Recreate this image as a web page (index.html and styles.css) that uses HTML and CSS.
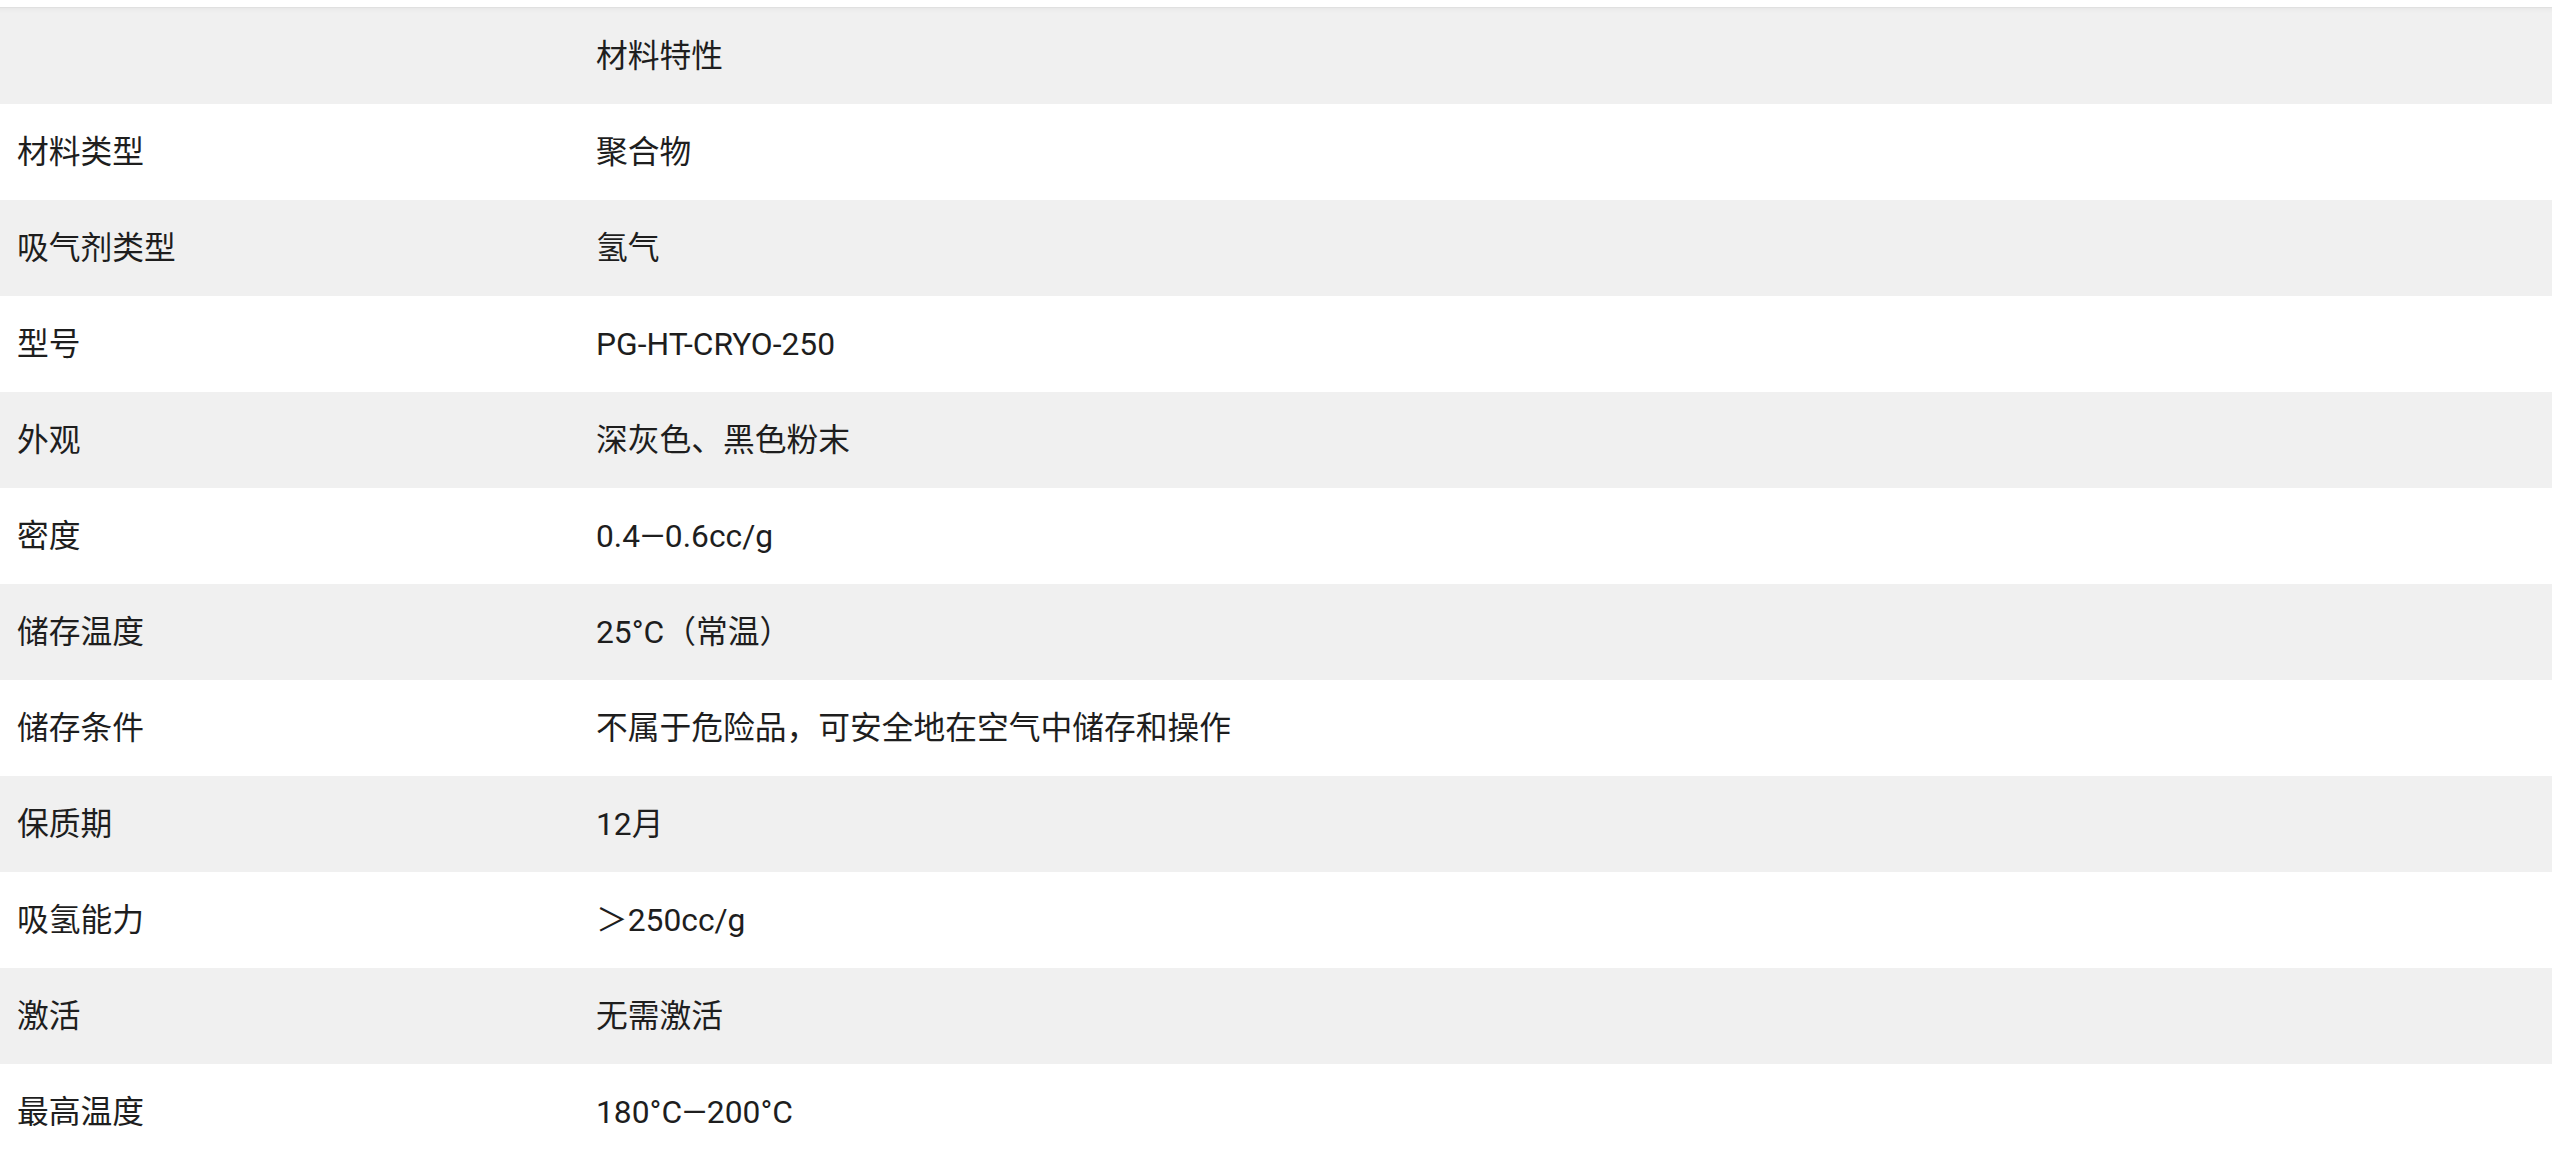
FILE: index.html
```html
<!DOCTYPE html>
<html lang="zh-CN">
<head>
<meta charset="utf-8">
<title>材料特性</title>
<link rel="stylesheet" href="styles.css">
</head>
<body>
<table class="spec">
  <tbody>
    <tr class="head"><td class="key"></td><td class="val">材料特性</td></tr>
    <tr><td class="key">材料类型</td><td class="val">聚合物</td></tr>
    <tr><td class="key">吸气剂类型</td><td class="val">氢气</td></tr>
    <tr><td class="key">型号</td><td class="val">PG-HT-CRYO-250</td></tr>
    <tr><td class="key">外观</td><td class="val">深灰色、黑色粉末</td></tr>
    <tr><td class="key">密度</td><td class="val">0.4—0.6cc/g</td></tr>
    <tr><td class="key">储存温度</td><td class="val">25°C（常温）</td></tr>
    <tr><td class="key">储存条件</td><td class="val">不属于危险品，可安全地在空气中储存和操作</td></tr>
    <tr><td class="key">保质期</td><td class="val">12月</td></tr>
    <tr><td class="key">吸氢能力</td><td class="val">＞250cc/g</td></tr>
    <tr><td class="key">激活</td><td class="val">无需激活</td></tr>
    <tr><td class="key">最高温度</td><td class="val">180°C—200°C</td></tr>
  </tbody>
</table>
</body>
</html>
```

FILE: styles.css
```css
html, body {
  margin: 0;
  padding: 0;
  background: #ffffff;
}

body {
  padding-top: 7px;
  font-family: Roboto, "Noto Sans CJK SC", sans-serif;
  font-size: 31.75px;
  color: #1e1e1e;
}

.spec {
  width: 2552px;
  border-collapse: collapse;
  border-spacing: 0;
  border-top: 1px solid #e0e0e0;
  table-layout: fixed;
}

.spec tr {
  height: 96px;
}

.spec tr:nth-child(odd) {
  background: #f0f0f0;
}

.spec tr.head td {
  box-shadow: inset 0 6px 5px -5px rgba(0, 0, 0, 0.05);
}

.spec td {
  padding: 2px 0 0 17px;
  vertical-align: middle;
  line-height: 40px;
  white-space: nowrap;
}

.spec td.key {
  width: 562px;
}
```
